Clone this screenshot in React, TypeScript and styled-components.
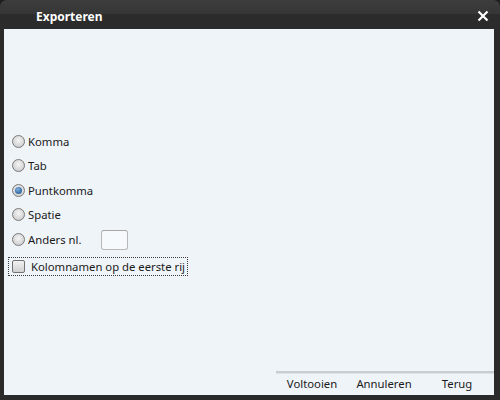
import React, { useState } from "react";
import styled, { createGlobalStyle, css } from "styled-components";

const GlobalStyle = createGlobalStyle`
  html, body {
    margin: 0;
    padding: 0;
    background: #1e1e1e;
  }
  body {
    font-family: "Noto Sans", "Liberation Sans", sans-serif;
  }
`;

const Window = styled.div`
  width: 500px;
  height: 400px;
  display: flex;
  flex-direction: column;
  box-sizing: border-box;
  background: #2a2a2a;
  border-radius: 7px 7px 0 0;
  overflow: hidden;
`;

const TitleBar = styled.div`
  height: 29px;
  flex-shrink: 0;
  display: flex;
  align-items: center;
  padding: 0 10px 0 36px;
  background: linear-gradient(#3d3d3d 0%, #363636 48%, #2c2c2c 50%, #2b2b2b 100%);
`;

const Title = styled.div`
  flex: 1;
  color: #ffffff;
  font-size: 12px;
  font-weight: 700;
  padding-top: 3px;
`;

const CloseButton = styled.button`
  border: 0;
  background: none;
  padding: 0;
  width: 12px;
  height: 12px;
  display: flex;
  margin-top: 3px;
  margin-right: 1px;
  cursor: pointer;
`;

const Body = styled.div`
  flex: 1;
  margin: 0 6px 5px 4px;
  background: #eff4f9;
  display: flex;
  flex-direction: column;
`;

const Options = styled.div`
  display: flex;
  flex-direction: column;
  padding: 100px 0 0 4px;
`;

const RadioRow = styled.label`
  height: 24.5px;
  display: flex;
  align-items: center;
  gap: 3px;
  padding-left: 4px;
  font-size: 11.3px;
  color: #1a1a1a;
  cursor: default;
`;

const RadioDot = styled.span<{ $checked: boolean }>`
  width: 11px;
  height: 11px;
  border-radius: 50%;
  border: 1px solid #7a7a7a;
  background: radial-gradient(circle at 50% 40%, #f4f4f4 0%, #d8d8d8 60%, #c4c4c4 100%);
  display: flex;
  align-items: center;
  justify-content: center;

  ${({ $checked }) =>
    $checked &&
    css`
      &::after {
        content: "";
        width: 7px;
        height: 7px;
        border-radius: 50%;
        background: radial-gradient(circle at 40% 35%, #7fb0dc 0%, #3a72aa 60%, #2a5688 100%);
      }
    `}
`;

const OtherInput = styled.input`
  width: 27px;
  height: 20px;
  box-sizing: border-box;
  margin: 2px 0 0 17px;
  border: 1px solid #b8b8b8;
  border-top-color: #a6a6a6;
  border-radius: 3px;
  background: #f7fafc;
  outline: none;
`;

const CheckRow = styled.label`
  align-self: flex-start;
  display: flex;
  align-items: center;
  gap: 6px;
  height: 19px;
  box-sizing: border-box;
  margin-top: 5px;
  padding: 0 2px 0 3px;
  border: 1px dotted #3a3a3a;
  font-size: 11.3px;
  color: #1a1a1a;
`;

const CheckBox = styled.span`
  width: 13px;
  height: 13px;
  box-sizing: border-box;
  border: 1px solid #737373;
  border-radius: 2px;
  background: linear-gradient(#f2f2f2, #d0d0d0);
`;

const Footer = styled.div`
  margin: auto 0 0 272px;
  display: grid;
  grid-template-columns: 72px 72px 1fr;
  height: 22px;
  border-top: 2px solid #c9cdd2;
  box-shadow: inset 0 1px 0 #dfe3e7;
`;

const FooterButton = styled.button`
  border: 0;
  background: none;
  padding: 0 0 1px;
  font-family: inherit;
  font-size: 11.3px;
  color: #1a1a1a;
  cursor: pointer;
`;

const separators = ["Komma", "Tab", "Puntkomma", "Spatie"];

export default function App() {
  const [choice, setChoice] = useState("Puntkomma");

  return (
    <>
      <GlobalStyle />
      <Window>
        <TitleBar>
          <Title>Exporteren</Title>
          <CloseButton aria-label="Sluiten">
            <svg width="12" height="12" viewBox="0 0 12 12">
              <path d="M1.5 1.5 L10.5 10.5 M10.5 1.5 L1.5 10.5" stroke="#ffffff" strokeWidth="2.2" />
            </svg>
          </CloseButton>
        </TitleBar>
        <Body>
          <Options>
            {separators.map((s) => (
              <RadioRow key={s} onClick={() => setChoice(s)}>
                <RadioDot $checked={choice === s} />
                {s}
              </RadioRow>
            ))}
            <RadioRow onClick={() => setChoice("Anders")}>
              <RadioDot $checked={choice === "Anders"} />
              Anders nl.
              <OtherInput />
            </RadioRow>
            <CheckRow>
              <CheckBox />
              Kolomnamen op de eerste rij
            </CheckRow>
          </Options>
          <Footer>
            <FooterButton>Voltooien</FooterButton>
            <FooterButton>Annuleren</FooterButton>
            <FooterButton>Terug</FooterButton>
          </Footer>
        </Body>
      </Window>
    </>
  );
}
